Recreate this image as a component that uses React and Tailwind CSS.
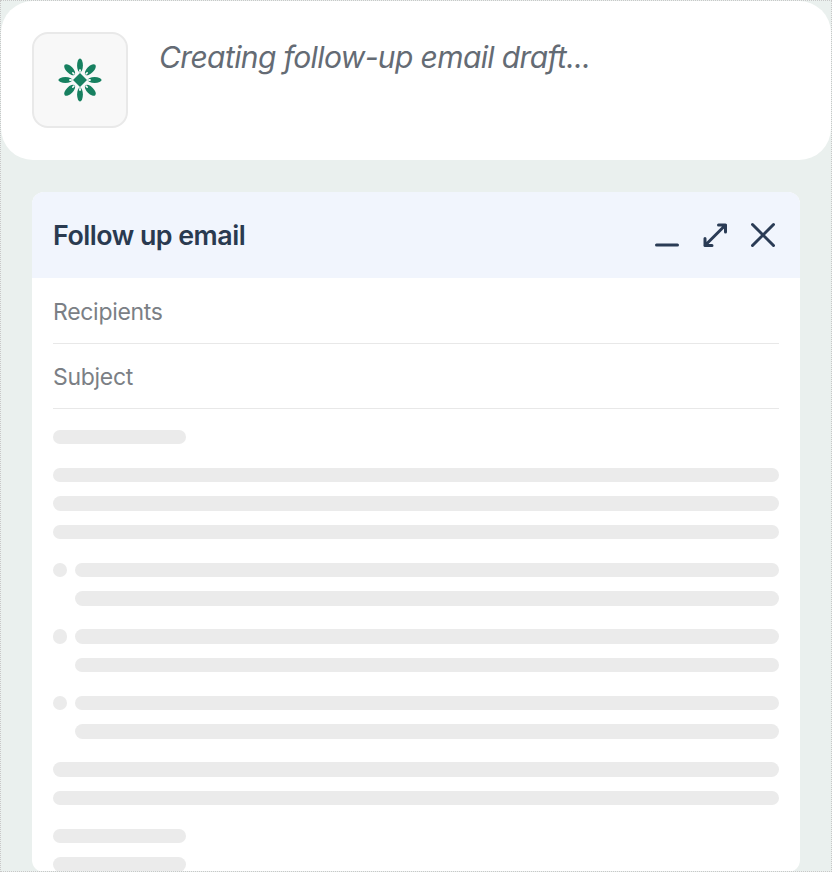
const font = { fontFamily: 'Inter, sans-serif' };

function Bar({ className = '' }) {
  return <div className={`h-[14.4px] rounded-full bg-[#ebebeb] ${className}`} />;
}

function BulletItem() {
  return (
    <div className="flex gap-[7.6px]">
      <div className="h-[14.4px] w-[14.4px] shrink-0 rounded-full bg-[#ebebeb]" />
      <div className="flex flex-1 flex-col gap-[14px]">
        <Bar />
        <Bar />
      </div>
    </div>
  );
}

function Logo() {
  const petals = [0, 45, 90, 135, 180, 225, 270, 315];
  return (
    <svg width="44" height="44" viewBox="0 0 44 44">
      {petals.map((deg) => (
        <g key={deg} transform={`rotate(${deg} 22 22)`}>
          <ellipse cx="22" cy="7.4" rx={deg % 90 === 0 ? 2.9 : 3.4} ry="7" fill="#178060" />
          <ellipse cx="22" cy="12.6" rx="0.9" ry="1.6" fill="#ffffff" />
        </g>
      ))}
      <path d="M22 15 L29 22 L22 29 L15 22 Z" fill="#178060" />
    </svg>
  );
}

export default function App() {
  return (
    <div className="h-[872px] w-[832px] overflow-hidden border border-dotted border-[#c8c8c8] bg-[#eaf0ee]" style={font}>
      {/* Status card */}
      <div className="flex h-[159px] gap-[31px] rounded-[32px] bg-white pl-[31px] pt-[31px]">
        <div className="flex h-24 w-24 items-center justify-center rounded-2xl border-2 border-[#e9e9e9] bg-[#f8f8f8]">
          <Logo />
        </div>
        <p className="pt-[5px] text-[30px] leading-[40px] tracking-[-0.62px] text-[#646b74] italic">
          Creating follow-up email draft...
        </p>
      </div>

      {/* Email draft */}
      <div className="mx-[31px] mt-8 h-[680px] overflow-hidden rounded-xl bg-white">
        <div className="flex h-[86px] items-center justify-between bg-[#f1f5fd] pl-[21px] pr-[23px]">
          <h2 className="pt-px text-[26.8px] font-semibold tracking-[-0.5px] text-[#2a3a50]">Follow up email</h2>
          <div className="flex items-center gap-[22px] text-[#2a3b55]">
            <svg width="26" height="26" viewBox="0 0 26 26" fill="none" stroke="currentColor" strokeWidth="3" strokeLinecap="round" strokeLinejoin="round">
              <path d="M1.5 23H22.5" />
            </svg>
            <svg width="26" height="26" viewBox="0 0 26 26" fill="none" stroke="currentColor" strokeWidth="3" strokeLinecap="round" strokeLinejoin="round">
              <path d="M2 23.5L22.5 3M15.5 3H22.5V10M2 16.5V23.5H9" />
            </svg>
            <svg width="26" height="26" viewBox="0 0 26 26" fill="none" stroke="currentColor" strokeWidth="3" strokeLinecap="round" strokeLinejoin="round">
              <path d="M1.5 2.5L22.5 23.5M22.5 2.5L1.5 23.5" />
            </svg>
          </div>
        </div>

        <div className="px-[21px]">
          <div className="flex h-[66px] items-center border-b border-[#e8e8e8] pt-[3px] text-[23px] tracking-[-0.3px] text-[#7b7f85]">Recipients</div>
          <div className="flex h-[65px] items-center border-b border-[#e8e8e8] pt-[2px] text-[23px] tracking-[-0.3px] text-[#7b7f85]">Subject</div>

          <div className="flex flex-col gap-[23.7px] pt-[21px]">
            <Bar className="w-[133px]" />
            <div className="flex flex-col gap-[14px]">
              <Bar />
              <Bar />
              <Bar />
            </div>
            <BulletItem />
            <BulletItem />
            <BulletItem />
            <div className="flex flex-col gap-[14px]">
              <Bar />
              <Bar />
            </div>
            <div className="flex flex-col gap-[14px]">
              <Bar className="w-[133px]" />
              <Bar className="w-[133px]" />
            </div>
          </div>
        </div>
      </div>
    </div>
  );
}
